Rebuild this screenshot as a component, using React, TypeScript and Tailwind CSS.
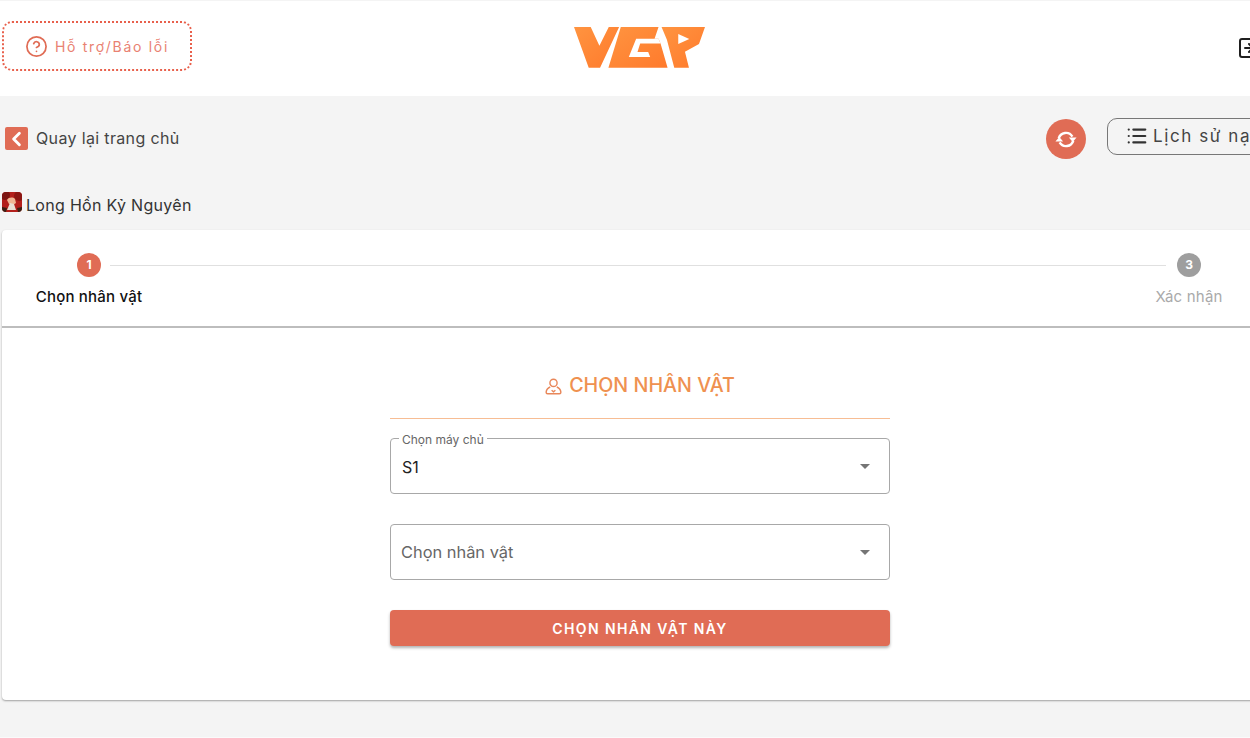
import { ChevronLeft, CircleHelp, List, SquareArrowRight } from 'lucide-react';

const VgpLogo = () => (
  <svg viewBox="72 52 392 154" preserveAspectRatio="none" className="w-[131px] h-[41px]">
    <defs>
      <linearGradient id="vgp" x1="0" y1="0" x2="1" y2="1">
        <stop offset="0" stopColor="#ff9440" />
        <stop offset="1" stopColor="#ff7a2c" />
      </linearGradient>
    </defs>
    {/* V */}
    <path fill="url(#vgp)" d="M72 52H122L148 122L176 52H207L150 205H116Z" />
    {/* G */}
    <path fill="url(#vgp)" d="M212 52H325L313 96H325L331 114L352 205H175Z" />
    <path fill="#fff" d="M325 96H258L236 165H300L294 146H262L270 114H331Z" />
    {/* P */}
    <path fill="url(#vgp)" d="M334 52H464L446 116L404 145L416 205H372L350 100Z" />
    <path fill="#fff" d="M384 78L417 97L384 116Z" />
  </svg>
);

const SyncIcon = () => (
  <svg viewBox="0 0 20 17" fill="none" className="w-[22px] h-[19px]">
    <path d="M3.4 7.5A6.8 6.8 0 0 1 15.8 5.8" stroke="#fff" strokeWidth="2.2" />
    <path d="M16.6 9.5A6.8 6.8 0 0 1 4.2 11.2" stroke="#fff" strokeWidth="2.2" />
    <path d="M12.6 6.6h7l-3.5 4.2z" fill="#fff" />
    <path d="M.4 10.4h7L3.9 6.2z" fill="#fff" />
  </svg>
);

const GameIcon = () => (
  <svg viewBox="0 0 20 20" className="w-5 h-5 rounded-[4px]">
    <rect width="20" height="20" fill="#b3201c" />
    <circle cx="3" cy="3" r="5" fill="#7c1512" />
    <circle cx="17" cy="4" r="5" fill="#8c1713" />
    <path d="M5 8c2-3 6-3 8-1l1 4-3 2-4-1z" fill="#f0b795" />
    <path d="M8 11l4 1 2 6H5z" fill="#e9e1d5" />
    <path d="M0 15l5 1-1 4H0zM20 15l-5 1 1 4h4z" fill="#3a2014" />
  </svg>
);

const PersonIcon = () => (
  <svg viewBox="0 0 18 18" fill="none" stroke="#e8875a" strokeWidth="1.5" className="w-[17px] h-[17px]">
    <circle cx="9" cy="5.2" r="3.8" />
    <path d="M5.5 9.5C3 10.5 1.5 12.5 1.2 15c0 1 .6 1.6 1.5 1.6h12.6c.9 0 1.5-.6 1.5-1.6-.3-2.5-1.8-4.5-4.3-5.5" />
    <path d="M7 13l2 1.6L11 13" />
  </svg>
);

const Caret = () => <span className="w-0 h-0 border-x-[5px] border-x-transparent border-t-[5px] border-t-[#757575]" />;

const StepDot = ({ label, active }: { label: string; active?: boolean }) => (
  <div
    className={`w-6 h-6 rounded-full flex items-center justify-center text-[12px] font-bold text-white ${
      active ? 'bg-[#e06c55]' : 'bg-[#9e9e9e]'
    }`}
  >
    {label}
  </div>
);

const App = () => {
  return (
    <div className="w-[1250px] h-[738px] overflow-hidden bg-[#f4f4f4] border-b border-[#fafafa] font-['Inter','Noto_Sans',sans-serif]">
      <div className="w-[1280px]">
        {/* header */}
        <div className="h-24 bg-white border-t border-[#f4f4f4] pl-0.5 pr-[19px] grid grid-cols-[1fr_auto_1fr] items-center">
          <button className="w-[190px] h-[50px] mt-[-5px] rounded-[10px] border-2 border-dotted border-[#e8604c] flex items-center justify-center gap-[7px] text-[#e98272] text-[14px] tracking-[1.7px]">
            <CircleHelp className="w-[23px] h-[23px] text-[#e06c55]" strokeWidth={1.8} />
            Hỗ trợ/Báo lỗi
          </button>
          <div className="mt-[-3px] ml-[16px]">
            <VgpLogo />
          </div>
          <SquareArrowRight className="w-6 h-6 text-[#1f1f1f] justify-self-end mt-[-2px]" />
        </div>

        {/* back + actions */}
        <div className="h-[96px] pl-[5px] pt-[23px] flex items-start justify-between">
          <div className="flex items-center gap-2 mt-[8px]">
            <div className="w-[23px] h-[23px] rounded-[2px] bg-[#e06c55] flex items-center justify-center">
              <ChevronLeft className="w-6 h-6 text-white" strokeWidth={3} />
            </div>
            <span className="text-[#444] text-[16px] tracking-[0.35px] mt-[-1px]">Quay lại trang chủ</span>
          </div>
          <div className="flex items-center gap-[21px]">
            <div className="w-10 h-10 rounded-full bg-[#e06c55] flex items-center justify-center">
              <SyncIcon />
            </div>
            <button className="w-[173px] h-[37px] mt-[-6px] rounded-[10px] border border-[#777] flex items-center pl-[18px] gap-[5px] text-[#444] text-[17px] tracking-[1.6px]">
              <List className="w-[22px] h-[22px] text-[#333]" strokeWidth={2.4} />
              <span className="mt-[2px]">Lịch sử nạp</span>
            </button>
          </div>
        </div>

        {/* game title */}
        <div className="h-[38px] pl-0.5 flex items-start text-[#333] text-[16px] tracking-[0.3px]">
          <GameIcon />
          <span className="ml-1 mt-[1px]">Long Hồn Kỷ Nguyên</span>
        </div>

        {/* card */}
        <div className="ml-0.5 w-[1276px] bg-white rounded-[4px] shadow-[0_1px_2px_rgba(0,0,0,0.35)]">
          <div className="h-[98px] border-b-2 border-[#bdbdbd] flex">
            <div className="w-[174px] flex flex-col items-center pt-[23px]">
              <StepDot label="1" active />
              <div className="mt-[9px] text-[15px] font-medium tracking-[0.2px] text-[#111]">Chọn nhân vật</div>
            </div>
            <div className="flex-1 h-px bg-[#e0e0e0] mt-[35px] ml-[-66px] mr-[-64px]" />
            <div className="w-[174px] flex flex-col items-center pt-[23px] mr-[2px]">
              <StepDot label="3" />
              <div className="mt-[9px] text-[15px] tracking-[0.2px] text-[#aaa]">Xác nhận</div>
            </div>
          </div>

          <div className="h-[372px] pt-[44px]">
            <div className="w-[500px] ml-[388px]">
              <div className="flex items-center justify-center gap-[7px] h-[26px] mt-[1px] text-[#ef9150] text-[19.7px] font-medium">
                <PersonIcon />
                CHỌN NHÂN VẬT
              </div>
              <div className="mt-[19px] border-b border-[#f7bd94]" />

              <div className="relative mt-[19px] h-14 rounded-[4px] border border-[#a8a8a8] flex items-center justify-between pl-[11px] pr-[19px] text-[#222] text-[16px]">
                <span className="absolute left-[8px] top-[-5px] bg-white px-[3px] text-[12px] leading-[12px] text-[#666]">
                  Chọn máy chủ
                </span>
                <span className="mt-[2px]">S1</span>
                <Caret />
              </div>

              <div className="mt-[30px] h-14 rounded-[4px] border border-[#a8a8a8] flex items-center justify-between pl-[10px] pr-[19px] text-[#666] text-[16.4px]">
                Chọn nhân vật
                <Caret />
              </div>

              <button className="mt-[30px] w-full h-9 rounded-[4px] bg-[#e06c55] text-white text-[14px] font-semibold tracking-[1.4px] shadow-[0_2px_3px_rgba(0,0,0,0.3)]">
                CHỌN NHÂN VẬT NÀY
              </button>
            </div>
          </div>
        </div>
      </div>
    </div>
  );
};

export default App;
